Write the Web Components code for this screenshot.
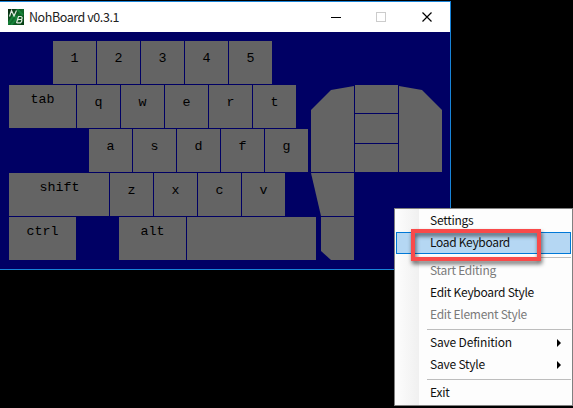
<!DOCTYPE html>
<html lang="en"><head><meta charset="utf-8"><title>NohBoard</title>
<style>html,body{margin:0;width:573px;height:408px;overflow:hidden;background:#000}</style></head>
<body><desktop-view></desktop-view>
<script>
const define=(name,css,html,ready)=>customElements.define(name,class extends HTMLElement{
  connectedCallback(){
    if(this.shadowRoot)return;
    const root=this.attachShadow({mode:'open'});
    root.innerHTML=`<style>:host{box-sizing:border-box}*{box-sizing:border-box}${css}</style>${typeof html==='function'?html(this):html}`;
    if(ready)ready(this,root);
  }
});
// Label tracked so that it takes the advance width given in "w".
define('fit-text',':host{display:inline-block;white-space:nowrap}span{display:inline-block}','<span><slot></slot></span>',(el,root)=>{
  const s=root.querySelector('span'),w=+el.getAttribute('w');
  const now=s.getBoundingClientRect().width;
  s.style.letterSpacing=(w-now)/el.textContent.length+'px';
});
define('key-cap',`:host{display:block;flex:none;height:var(--h,43px);background:#646464;color:#000;text-align:center;
  font:13.33px/16px "Liberation Mono","Courier New",monospace;padding-top:10px}
  :host([word]){padding-top:7px}:host([w="100"]){padding-left:1px}`,'<slot></slot>',el=>{
  el.style.width=(el.getAttribute('w')||43)+'px';
  if(el.hasAttribute('h'))el.style.setProperty('--h',el.getAttribute('h')+'px');
});
define('key-row',':host{display:flex;gap:1px;height:43px}','<slot></slot>');
define('key-board',`:host{display:flex;background:#000064;height:237px;padding:9px 0 0 9px}
  .main{display:flex;flex-direction:column;gap:1px;width:302px}
  .thumb{padding-top:44px;display:flex;flex-direction:column;gap:1px}
  .top{display:flex;gap:1px}.mid{display:flex;flex-direction:column;gap:1px}
  key-cap{flex:none}
  .l{clip-path:polygon(0 25px,20px 5px,43px 1px,43px 100%,0 100%)}
  .r{clip-path:polygon(0 1px,23px 5px,43px 25px,43px 100%,0 100%)}
  .s{clip-path:polygon(0 0,100% 0,100% 100%,10px 100%)}
  .b{margin-left:10px;clip-path:polygon(0 0,100% 0,100% 100%,10px 100%,0 34px)}`,()=>{
  const keys=s=>[...s].map(c=>`<key-cap>${c}</key-cap>`).join('');
  return `<div class="main">
  <key-row style="margin-left:44px">${keys('12345')}</key-row>
  <key-row><key-cap word w="67">tab</key-cap>${keys('qwert')}</key-row>
  <key-row style="margin-left:80px">${keys('asdfg')}</key-row>
  <key-row><key-cap word w="100">shift</key-cap>${keys('zxcv')}</key-row>
  <key-row><key-cap word w="67">ctrl</key-cap><key-cap word w="67" style="margin-left:42px">alt</key-cap><key-cap w="129"></key-cap></key-row></div>
  <div class="thumb"><div class="top"><key-cap class="l" h="87"></key-cap>
  <div class="mid"><key-cap h="28"></key-cap><key-cap h="29"></key-cap><key-cap h="28"></key-cap></div>
  <key-cap class="r" h="87"></key-cap></div><key-cap class="s"></key-cap><key-cap class="b" w="33"></key-cap></div>`;
});
define('title-bar',`:host{display:flex;align-items:center;height:30px;background:#fff;padding-left:8px;font:12.5px/16px "Noto Sans CJK KR",sans-serif;color:#222}
  svg{flex:none;display:block}.t{margin-left:5px;padding-bottom:1px;width:200px}.c{margin-left:auto;margin-right:16px}`,
  `<svg width="16" height="16"><defs><linearGradient id="g" x2="1" y2="1"><stop stop-color="#08200d"/><stop offset=".5" stop-color="#0f6a2a"/><stop offset="1" stop-color="#063a12"/></linearGradient></defs>
  <rect width="16" height="16" fill="url(#g)"/><path d="M0 15L6 6L9 9L3 16M9 0L15 6" stroke="#16823a" stroke-width="2" fill="none"/>
  <path d="M1.500 7.500L3.500 1.500L6 7L8.500 1.500M8.500 14L10.500 7.500H13Q15 8.500 13.500 10.300L10 10.700M13.500 10.300Q14.500 12 12.500 13.800H8.500" stroke="#dfe9df" stroke-width="1.200" fill="none"/></svg>
  <span class="t"><fit-text w="90">NohBoard v0.3.1</fit-text></span>
  <svg class="c" width="104" height="12" shape-rendering="crispEdges"><path d="M1 6.500H11" stroke="#000"/><rect x="46.500" y="1.500" width="9" height="9" fill="none" stroke="#ccc"/>
  <path d="M92.500 1.500L101.500 10.500M101.500 1.500L92.500 10.500" stroke="#000" stroke-width="1.200" shape-rendering="auto"/></svg>`);
define('app-window',':host{display:block;width:451px;height:269px;border:solid #1883d7;border-width:1px 1px 1px 0;background:#000064}','<title-bar></title-bar><key-board></key-board>');
define('menu-item',`:host{display:flex;align-items:center;height:22px;padding:0 0 2px 33px;border:1px solid transparent;color:#111}
  :host([disabled]){color:#7a7a7a}:host([active]){background:#b5d7f3;border-color:#0078d7}
  svg{margin:2px 9px 0 auto}`,el=>`<slot></slot>${el.hasAttribute('sub')?'<svg width="4" height="8"><path d="M0 0L4 4L0 8Z"/></svg>':''}`);
define('menu-line',':host{display:block;height:1px;margin:3px 0 2px 31px;background:#bdbdbd}','');
define('context-menu',`:host{display:block;width:179px;height:198px;border:1px solid #808080;
  background:linear-gradient(90deg,#fcfcfc 2px,#f0f0f0 24px,#fdfdfd 24px);padding:1px;font:12px/18px "Noto Sans CJK KR",sans-serif}`,
  `<menu-item><fit-text w="43.5">Settings</fit-text></menu-item><menu-item active><fit-text w="80">Load Keyboard</fit-text></menu-item><menu-line></menu-line>
  <menu-item disabled><fit-text w="66">Start Editing</fit-text></menu-item><menu-item><fit-text w="104">Edit Keyboard Style</fit-text></menu-item><menu-item disabled><fit-text w="97">Edit Element Style</fit-text></menu-item><menu-line></menu-line>
  <menu-item sub><fit-text w="82">Save Definition</fit-text></menu-item><menu-item sub><fit-text w="55">Save Style</fit-text></menu-item><menu-line></menu-line><menu-item><fit-text w="19.5">Exit</fit-text></menu-item>`);
define('focus-box',':host{display:block;width:130px;height:32px;border:4px solid #f94a4a;filter:drop-shadow(1px 3px 2px rgba(0,0,0,.6))}','');
define('desktop-view',`:host{display:block;position:relative;width:573px;height:408px;background:#000;padding-top:1px}
  context-menu{position:absolute;left:394px;top:208px}focus-box{position:absolute;left:411px;top:229px}`,'<app-window></app-window><context-menu></context-menu><focus-box></focus-box>');
</script></body></html>
